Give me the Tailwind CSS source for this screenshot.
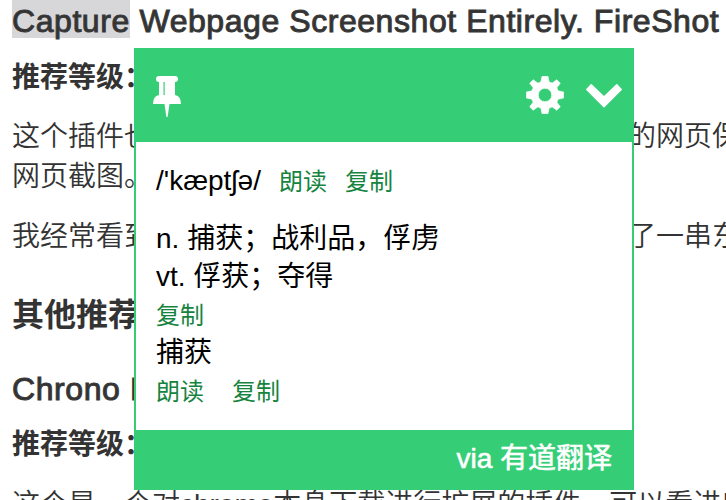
<!DOCTYPE html>
<html lang="zh-CN">
<head>
<meta charset="utf-8">
<title>Chrome 插件推荐</title>
<script src="https://cdn.jsdelivr.net/npm/@tailwindcss/browser@4"></script>
</head>
<body class="relative h-[500px] w-[726px] overflow-hidden bg-white font-['Liberation_Sans','Noto_Sans_CJK_SC',sans-serif] text-[28px] text-[#333]">
<main class="h-[500px] overflow-hidden whitespace-nowrap pl-3 leading-10">
  <h2 class="h-[38px] text-[32px] leading-[42px] tracking-[0.56px] [-webkit-text-stroke:1px_#3a3a3a]"><span class="inline-block h-[38px] w-[118px] bg-[#d7d7d9] align-top">Capture</span> Webpage Screenshot Entirely. FireShot</h2>
  <p class="mt-5 font-bold">推荐等级：</p>
  <div class="mt-[19px] flex font-[350]"><p class="w-[616px] shrink-0">这个插件也</p><p>的网页保</p></div>
  <p class="font-[350]">网页截图。</p>
  <div class="mt-5 flex font-[350]"><p class="w-[616px] shrink-0">我经常看到</p><p>了一串东</p></div>
  <h1 class="mt-[38px] text-[32px] font-bold">其他推荐</h1>
  <h2 class="mt-[34px] text-[32px] tracking-[0.59px] [-webkit-text-stroke:1px_#3a3a3a]">Chrono D</h2>
  <p class="mt-4 font-bold">推荐等级：</p>
  <p class="mt-5 font-[350]">这个是一个对chrome本身下载进行扩展的插件，可以看进度</p>
</main>
<section class="absolute left-[134px] top-12 flex h-[442px] w-[500px] flex-col border-2 border-[#35ce76] bg-white text-black">
  <header class="flex h-[92px] shrink-0 items-center bg-[#35ce76] pl-[17px] pr-2.5 text-white">
    <svg class="mt-[2px] h-[42px] w-7" viewBox="0 0 28 42" fill="currentColor"><path fill-rule="evenodd" d="M6 0H22Q25 0 25 3Q25 6 22 6V19Q28 20 28 28H16.5L14.6 41H13.4L11.5 28H0Q0 20 6 19V6Q3 6 3 3Q3 0 6 0ZM10.5 6V19H11.7V6Z"/></svg>
    <svg class="-mt-[2px] ml-auto h-[38px] w-[38px]" viewBox="0 0 38 38" fill="currentColor" stroke="currentColor" stroke-linejoin="round" stroke-width=".6"><path fill-rule="evenodd" d="M16 .3H22L23.2 5.9L26.2 7.1L30.8 3.7L34.3 7.2L30.9 11.8L32.1 14.8L37.7 16V22L32.1 23.2L30.9 26.2L34.3 30.8L30.8 34.3L26.2 30.9L23.2 32.1L22 37.7H16L14.8 32.1L11.8 30.9L7.2 34.3L3.7 30.8L7.1 26.2L5.9 23.2L.3 22V16L5.9 14.8L7.1 11.8L3.7 7.2L7.2 3.7L11.8 7.1L14.8 5.9ZM19 12.3A6.7 6.7 0 1 0 19 25.7A6.7 6.7 0 1 0 19 12.3Z"/></svg>
    <svg class="ml-[22px] h-6 w-9" viewBox="0 0 36 24" fill="currentColor" stroke="currentColor" stroke-linejoin="round" stroke-width="1.5"><path d="M5.2 .8L18 13L30.8 .8L35.2 5.4L18 22.8L.8 5.4Z"/></svg>
  </header>
  <div class="flex h-[288px] shrink-0 flex-col pl-5 pt-5 leading-[38px]">
    <p class="flex h-[38px]"><span class="w-[123px]">/'kæptʃə/</span><a class="w-[66px] text-2xl leading-10 text-[#16843f]">朗读</a><a class="text-2xl leading-10 text-[#16843f]">复制</a></p>
    <p class="mt-5">n. 捕获；战利品，俘虏</p>
    <p>vt. 俘获；夺得</p>
    <p class="flex h-[38px]"><a class="text-2xl leading-10 text-[#16843f]">复制</a></p>
    <p>捕获</p>
    <p class="flex h-[38px] gap-7"><a class="text-2xl leading-10 text-[#16843f]">朗读</a><a class="text-2xl leading-10 text-[#16843f]">复制</a></p>
  </div>
  <footer class="flex h-[58px] shrink-0 items-center justify-end bg-[#35ce76] pr-5 text-white [-webkit-text-stroke:0.6px_white]">via 有道翻译</footer>
</section>
</body>
</html>
